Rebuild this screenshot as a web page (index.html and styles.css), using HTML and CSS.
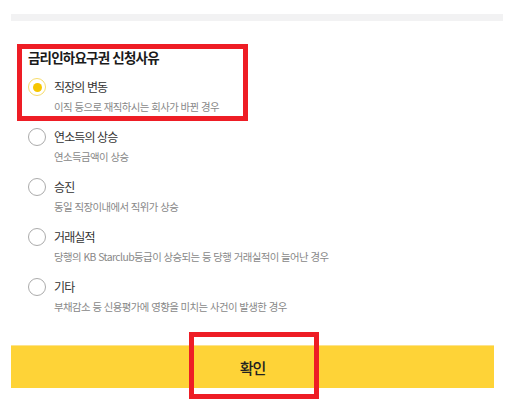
FILE: index.html
```html
<!DOCTYPE html>
<html lang="ko">
<head>
<meta charset="utf-8">
<link rel="stylesheet" href="styles.css">
</head>
<body>
<div class="page">
  <div class="top-bar"></div>
  <div class="section">
    <h2 class="title">금리인하요구권 신청사유</h2>
    <ul class="options">
      <li class="option">
        <div class="row"><span class="radio checked"></span><span class="label">직장의 변동</span></div>
        <div class="desc">이직 등으로 재직하시는 회사가 바뀐 경우</div>
      </li>
      <li class="option">
        <div class="row"><span class="radio"></span><span class="label">연소득의 상승</span></div>
        <div class="desc">연소득금액이 상승</div>
      </li>
      <li class="option">
        <div class="row"><span class="radio"></span><span class="label">승진</span></div>
        <div class="desc">동일 직장이내에서 직위가 상승</div>
      </li>
      <li class="option">
        <div class="row"><span class="radio"></span><span class="label">거래실적</span></div>
        <div class="desc">당행의 KB Starclub등급이 상승되는 등 당행 거래실적이 늘어난 경우</div>
      </li>
      <li class="option">
        <div class="row"><span class="radio"></span><span class="label">기타</span></div>
        <div class="desc">부채감소 등 신용평가에 영향을 미치는 사건이 발생한 경우</div>
      </li>
    </ul>
  </div>
  <button class="confirm">확인</button>
  <div class="mark mark-title"></div>
  <div class="mark mark-button"></div>
</div>
</body>
</html>
```
FILE: styles.css
```css
* { box-sizing: border-box; }
html, body { margin: 0; padding: 0; background: #fff; }
body {
  font-family: "Noto Sans CJK KR", "Noto Sans", sans-serif;
  color: #222;
}
.page {
  position: relative;
  width: 532px;
  height: 416px;
  padding-top: 14px;
}
.top-bar {
  margin-left: 11px;
  width: 492px;
  height: 7px;
  background: #f2f2f3;
}
.section {
  padding-left: 28px;
  padding-top: 26px;
}
.title {
  margin: 0;
  font-size: 13.5px;
  line-height: 20px;
  font-weight: 700;
  letter-spacing: -0.8px;
  color: #1a1a1a;
}
.options {
  list-style: none;
  margin: 11px 0 0 0;
  padding: 0;
}
.option {
  height: 50px;
}
.row {
  display: flex;
  align-items: center;
  gap: 8px;
  height: 18px;
}
.radio {
  position: relative;
  flex: none;
  width: 18px;
  height: 18px;
  border: 1.4px solid #ababab;
  border-radius: 50%;
}
.radio.checked {
  border-color: #f7dc6a;
  border-width: 1.6px;
}
.radio.checked::after {
  content: "";
  position: absolute;
  left: 50%;
  top: 50%;
  width: 9px;
  height: 9px;
  margin: -4.5px 0 0 -4.5px;
  border-radius: 50%;
  background: #f6c600;
}
.label {
  font-size: 12px;
  line-height: 18px;
  letter-spacing: -0.9px;
  color: #333;
}
.desc {
  margin-top: 3px;
  padding-left: 26px;
  font-size: 10.4px;
  line-height: 16px;
  letter-spacing: -0.55px;
  color: #888;
}
.confirm {
  display: block;
  margin: 17px 0 0 11px;
  width: 483px;
  height: 43px;
  border: 0;
  border-top: 1px solid #fde38c;
  background: #fed337;
  font-family: "Noto Sans CJK KR", "Noto Sans", sans-serif;
  font-size: 15px;
  font-weight: 500;
  letter-spacing: -1px;
  color: #222;
  padding: 0;
}
.mark {
  position: absolute;
  border: 5px solid #ee1d25;
}
.mark-title {
  left: 17px;
  top: 44px;
  width: 231px;
  height: 77px;
}
.mark-button {
  left: 189px;
  top: 332px;
  width: 130px;
  height: 67px;
}
```
